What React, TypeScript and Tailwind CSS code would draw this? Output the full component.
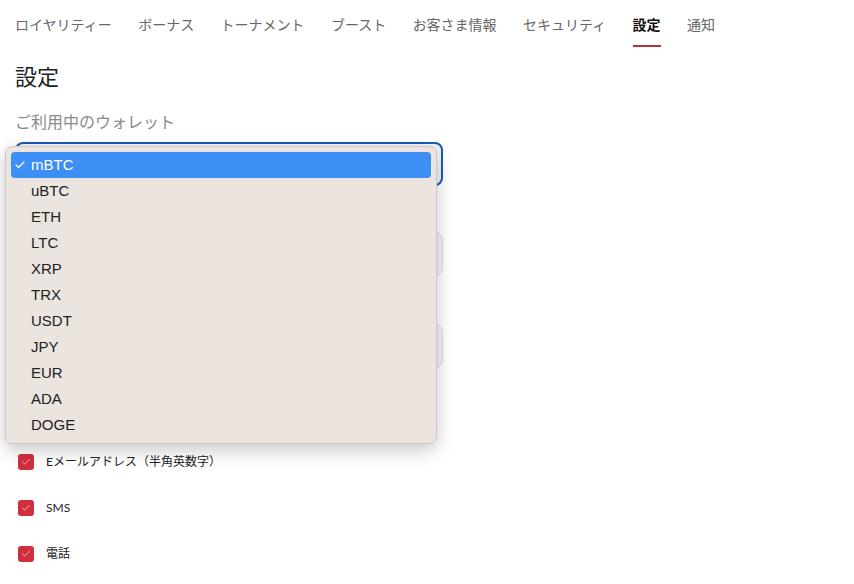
import { Check } from 'lucide-react';

const tabs = ['ロイヤリティー', 'ボーナス', 'トーナメント', 'ブースト', 'お客さま情報', 'セキュリティ', '設定', '通知'];
const currencies = ['mBTC', 'uBTC', 'ETH', 'LTC', 'XRP', 'TRX', 'USDT', 'JPY', 'EUR', 'ADA', 'DOGE'];
const contacts = ['Eメールアドレス（半角英数字）', 'SMS', '電話'];

const jp = { fontFamily: '"Noto Sans CJK JP", "Noto Sans", sans-serif' };

export default function App() {
  return (
    <div className="w-[854px] h-[584px] overflow-hidden bg-white" style={jp}>
      {/* Tabs */}
      <nav className="flex gap-[26.4px] px-[15px]">
        {tabs.map(tab => {
          const active = tab === '設定';
          return (
            <div key={tab} className="flex flex-col items-stretch pt-[14px]">
              <span className={`text-[14px] leading-[20px] ${active ? 'text-[#111] font-bold' : 'text-[#666]'}`}>{tab}</span>
              <span className={`mt-[11px] h-[2px] ${active ? 'bg-[#b8323a]' : 'bg-transparent'}`} />
            </div>
          );
        })}
      </nav>

      <div className="px-[15px]">
        <h1 className="mt-[13px] text-[22px] leading-[30px] text-[#222]">設定</h1>
        <p className="mt-[20px] text-[16px] leading-[22px] text-[#8a8a8a]">ご利用中のウォレット</p>

        {/* Wallet select (open) */}
        <div className="relative mt-[10px] w-[428px]">
          <div className="h-[44px] rounded-[8px] border-2 border-[#1d59b4] bg-[#f3f3f3]" />

          <div className="absolute left-[-10px] top-[4px] z-10 w-[432px] rounded-[7px] border border-[#cfc7c2] bg-[#ece4df] pt-[5px] pb-[5px] px-[5px] shadow-[0_6px_18px_rgba(0,0,0,0.22)]" style={{ fontFamily: '"Liberation Sans", Arial, sans-serif' }}>
            {currencies.map((c, i) => (
              <div
                key={c}
                className={`relative h-[26px] flex items-center pl-[20px] rounded-[4px] text-[15px] ${i === 0 ? 'bg-[#3d8ef5] text-white' : 'text-[#222]'}`}
              >
                {i === 0 && <Check className="absolute left-[3px] top-[7px] w-[12px] h-[12px]" strokeWidth={2.5} />}
                {c}
              </div>
            ))}
          </div>
        </div>

        {/* Other selects, mostly hidden behind the open menu */}
        <div className="mt-[46px] h-[44px] w-[428px] rounded-[8px] border border-[#dcdcdc] bg-[#f3f3f3]" />
        <div className="mt-[48px] h-[44px] w-[428px] rounded-[8px] border border-[#dcdcdc] bg-[#f3f3f3]" />

        {/* Contact preferences */}
        <div className="mt-[86px] ml-[3px] flex flex-col gap-[30px]">
          {contacts.map(c => (
            <label key={c} className="flex items-center gap-[12px] h-[16px]">
              <span className="flex w-[16px] h-[16px] items-center justify-center rounded-[3px] bg-[#d12f3d]">
                <Check className="w-[10px] h-[10px] text-[#f7c0c5]" strokeWidth={2.2} />
              </span>
              <span className="text-[12px] text-[#222]" style={{ fontFamily: 'Lato, "Noto Sans CJK JP", sans-serif' }}>{c}</span>
            </label>
          ))}
        </div>
      </div>
    </div>
  );
}
